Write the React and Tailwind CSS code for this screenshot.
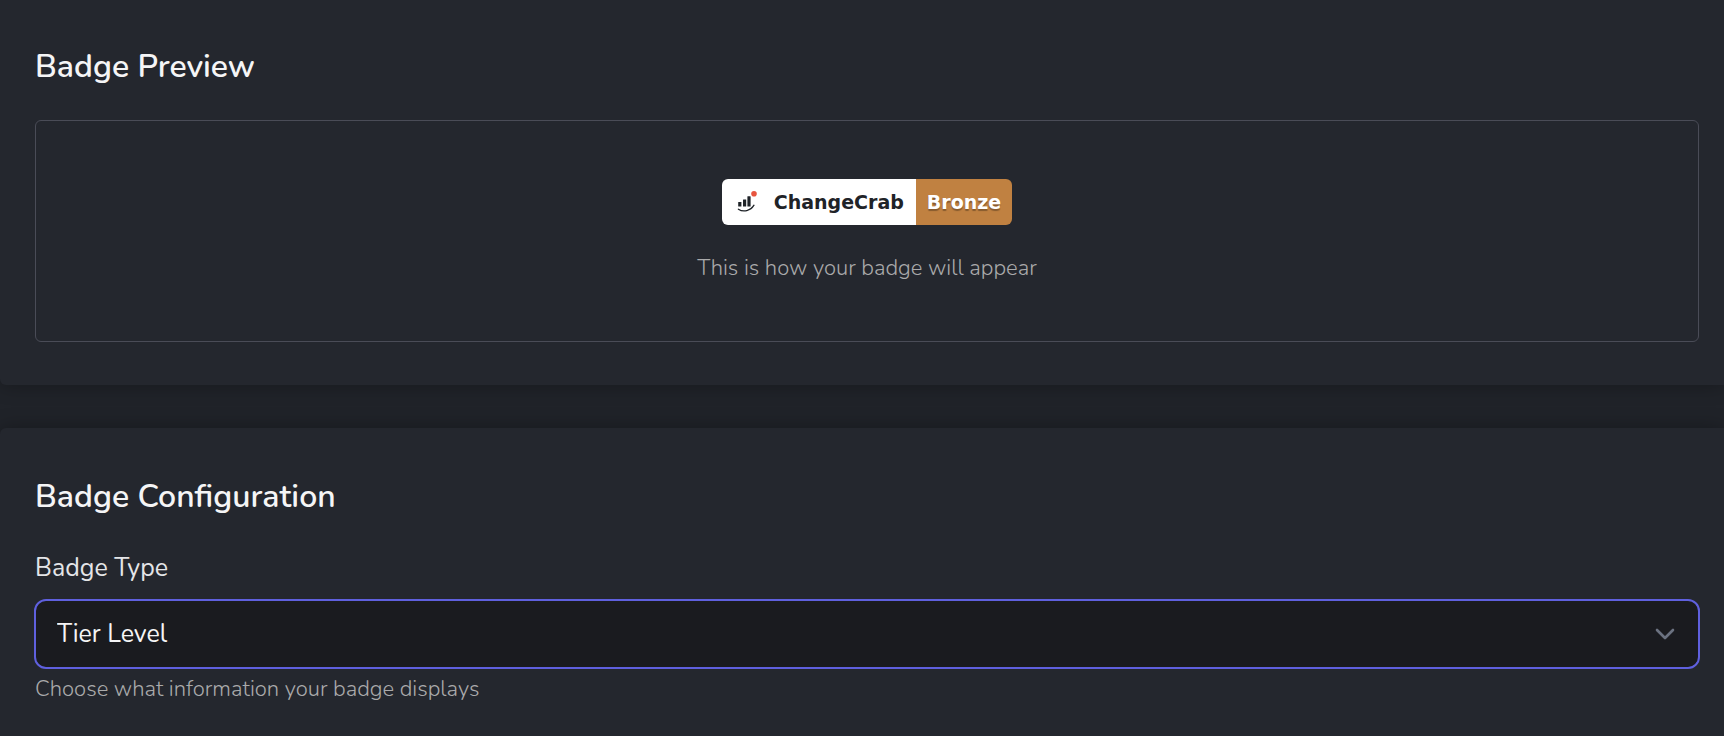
import { useState } from "react";

function CrabLogo() {
  return (
    <svg viewBox="0 0 24 24" className="h-6 w-6 shrink-0" aria-hidden="true">
      <g fill="#1f2328">
        <rect x="2.2" y="12" width="3.2" height="4.6" rx="0.4" />
        <rect x="7" y="9.4" width="3.2" height="7.2" rx="0.4" />
        <rect x="11.4" y="6.2" width="3.2" height="10.4" rx="0.4" />
      </g>
      <path d="M2.4 19.2C7.5 22.6 14.6 20.8 18 15.2" fill="none" stroke="#1f2328" strokeWidth="1.3" strokeLinecap="round" />
      <circle cx="18" cy="3.8" r="2.8" fill="#e8553f" />
    </svg>
  );
}

function Badge({ tier }) {
  return (
    <div className="flex h-[46px] overflow-hidden rounded-md font-['Verdana','DejaVu_Sans',sans-serif] text-[19px] font-bold leading-7">
      <div className="flex items-center gap-[14px] bg-white pl-[14px] pr-[12px] text-[#1f2328]">
        <CrabLogo />
        <span>ChangeCrab</span>
      </div>
      <div className="flex items-center bg-[#c08141] px-[11px] text-white [text-shadow:0_2px_1px_rgb(0_0_0/0.3)]">{tier}</div>
    </div>
  );
}

function Panel({ title, className, children }) {
  return (
    <section className={`bg-[#24272e] pl-[35px] pr-[25px] shadow-[0_0_20px_rgb(0_0_0/0.3)] ${className}`}>
      <h2 className="text-[32px] font-semibold leading-[46px] text-[#f5f5f6]">{title}</h2>
      {children}
    </section>
  );
}

export default function App() {
  const [type, setType] = useState("tier");
  return (
    <main className="flex min-h-screen flex-col gap-[43px] bg-[#202329] font-['Nunito',sans-serif]">
      <Panel title="Badge Preview" className="rounded-bl-md pb-[43px] pt-11">
        <div className="mt-[30px] flex flex-col items-center gap-[25px] rounded-md border border-[#4a4c57] px-6 pb-[55px] pt-[58px]">
          <Badge tier="Bronze" />
          <p className="text-[22px] font-light leading-9 text-[#aaaaab]">This is how your badge will appear</p>
        </div>
      </Panel>
      <Panel title="Badge Configuration" className="grow rounded-tl-md pb-7 pt-[46px]">
        <label htmlFor="badge-type" className="mt-7 block text-[25px] leading-10 text-[#e4e5e8]">
          Badge Type
        </label>
        <div className="-mx-px mt-[11px] grid items-center">
          <select
            id="badge-type"
            value={type}
            onChange={(e) => setType(e.target.value)}
            className="col-start-1 row-start-1 h-[70px] w-full appearance-none rounded-xl border-2 border-[#5f60de] bg-[#1a1b1f] px-[21px] pt-[2px] text-[25px] text-[#f5f5f6] outline-none"
          >
            <option value="tier">Tier Level</option>
          </select>
          <svg viewBox="0 0 20 12" className="pointer-events-none col-start-1 row-start-1 mr-[25px] h-3 w-5 justify-self-end" fill="none" stroke="#6b7280" strokeWidth="2.6" strokeLinecap="round" strokeLinejoin="round" aria-hidden="true">
            <path d="M2 2l8 8 8-8" />
          </svg>
        </div>
        <p className="mt-1 text-[22px] font-light leading-8 text-[#aaaaab]">Choose what information your badge displays</p>
      </Panel>
    </main>
  );
}
